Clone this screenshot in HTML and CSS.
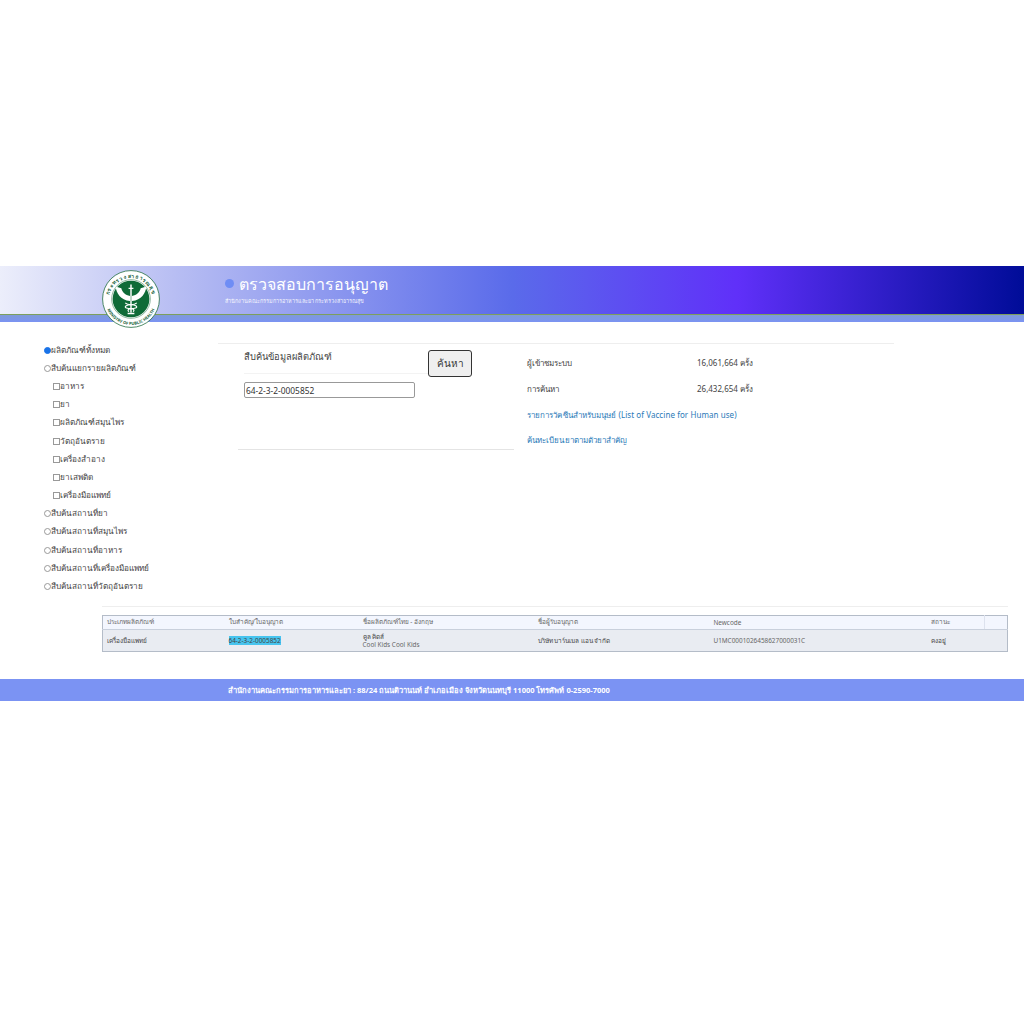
FILE: index.html
```html
<!DOCTYPE html>
<html lang="th">
<head>
<meta charset="utf-8">
<title>ตรวจสอบการอนุญาต</title>
<link rel="stylesheet" href="styles.css">
</head>
<body>
<header class="banner">
  <div class="banner-main">
    <span class="dot"></span>
    <div class="banner-text">
      <div class="banner-title">ตรวจสอบการอนุญาต</div>
      <div class="banner-sub">สำนักงานคณะกรรมการอาหารและยา กระทรวงสาธารณสุข</div>
    </div>
  </div>
  <div class="banner-strip"></div>
  <svg class="logo" viewBox="0 0 60 60" width="58" height="58" aria-label="logo">
    <defs>
      <path id="arc-top" d="M7.5 36a23 23 0 1 1 45 0"/>
      <path id="arc-bot" d="M3.5 34a26.8 26.8 0 0 0 53 0"/>
    </defs>
    <circle cx="30" cy="30" r="29.4" fill="#fff" stroke="#1c6b3c" stroke-width=".8"/>
    <circle cx="30" cy="30" r="19" fill="#0f6b38"/>
    <circle cx="30" cy="30" r="20" fill="none" stroke="#1c6b3c" stroke-width=".5"/>
    <text class="logo-t"><textPath href="#arc-top" startOffset="50%" text-anchor="middle">กระทรวงสาธารณสุข</textPath></text>
    <text class="logo-b"><textPath href="#arc-bot" startOffset="50%" text-anchor="middle">MINISTRY OF PUBLIC HEALTH</textPath></text>
    <path d="M30 15v29M27.5 19h5M26.5 45h7" stroke="#fff" stroke-width="1.5" fill="none"/>
    <path d="M29 27c-5-1-8-4-9-8l-6-2c1 7 5 14 15 15zM31 27c5-1 8-4 9-8l6-2c-1 7-5 14-15 15z" fill="#fff"/>
    <path d="M24 34c3 3 8 1 11 3s-2 3-5 3-4 2-2 3" stroke="#fff" stroke-width="1.2" fill="none"/>
    <path d="M36 34c-3 3-8 1-11 3s2 3 5 3 4 2 2 3" stroke="#fff" stroke-width="1.2" fill="none"/>
  </svg>
</header>

<main class="content">
  <nav class="filters">
    <label class="opt"><span class="radio on"></span>ผลิตภัณฑ์ทั้งหมด</label>
    <label class="opt"><span class="radio"></span>สืบค้นแยกรายผลิตภัณฑ์</label>
    <label class="opt sub"><span class="check"></span>อาหาร</label>
    <label class="opt sub"><span class="check"></span>ยา</label>
    <label class="opt sub"><span class="check"></span>ผลิตภัณฑ์สมุนไพร</label>
    <label class="opt sub"><span class="check"></span>วัตถุอันตราย</label>
    <label class="opt sub"><span class="check"></span>เครื่องสำอาง</label>
    <label class="opt sub"><span class="check"></span>ยาเสพติด</label>
    <label class="opt sub"><span class="check"></span>เครื่องมือแพทย์</label>
    <label class="opt"><span class="radio"></span>สืบค้นสถานที่ยา</label>
    <label class="opt"><span class="radio"></span>สืบค้นสถานที่สมุนไพร</label>
    <label class="opt"><span class="radio"></span>สืบค้นสถานที่อาหาร</label>
    <label class="opt"><span class="radio"></span>สืบค้นสถานที่เครื่องมือแพทย์</label>
    <label class="opt"><span class="radio"></span>สืบค้นสถานที่วัตถุอันตราย</label>
  </nav>

  <section class="center">
    <div class="search">
      <div class="search-row">
        <div class="search-field">
          <div class="search-title">สืบค้นข้อมูลผลิตภัณฑ์</div>
          <input class="search-input" type="text" value="64-2-3-2-0005852">
        </div>
        <button class="search-btn" type="button">ค้นหา</button>
      </div>
    </div>
    <div class="stats">
      <div class="stat"><span class="stat-label">ผู้เข้าชมระบบ</span><span>16,061,664 ครั้ง</span></div>
      <div class="stat"><span class="stat-label">การค้นหา</span><span>26,432,654 ครั้ง</span></div>
      <div class="stat"><a class="link">รายการวัคซีนสำหรับมนุษย์ (List of Vaccine for Human use)</a></div>
      <div class="stat"><a class="link">ค้นทะเบียนยาตามตัวยาสำคัญ</a></div>
    </div>
  </section>
</main>

<section class="results">
  <table class="grid">
    <thead>
      <tr>
        <th class="c1">ประเภทผลิตภัณฑ์</th>
        <th class="c2">ใบสำคัญ/ใบอนุญาต</th>
        <th class="c3">ชื่อผลิตภัณฑ์ไทย - อังกฤษ</th>
        <th class="c4">ชื่อผู้รับอนุญาต</th>
        <th class="c5">Newcode</th>
        <th class="c6">สถานะ</th>
        <th class="c7"></th>
      </tr>
    </thead>
    <tbody>
      <tr>
        <td>เครื่องมือแพทย์</td>
        <td><mark class="hit">64-2-3-2-0005852</mark></td>
        <td>คูล คิดส์<br><span class="en">Cool Kids Cool Kids</span></td>
        <td>บริษัท บาร์นเมล แอน จำกัด</td>
        <td class="en">U1MC0001026458627000031C</td>
        <td>คงอยู่</td>
        <td></td>
      </tr>
    </tbody>
  </table>
</section>

<footer class="foot">สำนักงานคณะกรรมการอาหารและยา : 88/24 ถนนติวานนท์ อำเภอเมือง จังหวัดนนทบุรี 11000 โทรศัพท์ 0-2590-7000</footer>
</body>
</html>
```
FILE: styles.css
```css
* { box-sizing: border-box; }
html, body { margin: 0; background: #fff; }
body {
  padding-top: 266px;
  font-family: "Noto Sans", "Liberation Sans", sans-serif;
  font-size: 8.2px;
  color: #444;
}

.banner { position: relative; height: 56px; }
.banner-main {
  height: 49px;
  display: flex;
  align-items: flex-start;
  padding: 9px 0 0 225px;
  background: linear-gradient(90deg, #eceefb 0, #b8bef3 17%, #5a6bea 50%, #6030f9 72%, #000c98 100%);
  border-bottom: 1px solid #7d9f5c;
}
.banner-strip { height: 7px; background: linear-gradient(180deg, #7f9ad8, #7b93f3); }
.dot { width: 9px; height: 9px; margin-top: 4px; border-radius: 50%; background: #6f8df5; }
.banner-text { margin-left: 5px; margin-top: -1px; color: #fff; }
.banner-title { font-size: 16px; line-height: 20px; font-weight: 500; }
.banner-sub { font-size: 5.5px; line-height: 8px; margin: 3px 0 0 -14px; opacity: .9; }

.logo { position: absolute; left: 102px; top: 4px; }
.logo-t { font-size: 5.4px; font-weight: 700; fill: #14603a; letter-spacing: .8px; }
.logo-b { font-size: 4.2px; font-weight: 700; fill: #14603a; }

.content { display: flex; padding: 19px 130px 0 44px; }
.filters { width: 174px; flex: none; display: flex; flex-direction: column; }
.opt { display: flex; align-items: center; height: 18.2px; white-space: nowrap; }
.sub { padding-left: 9px; }
.radio, .check { flex: none; width: 7px; height: 7px; border: 1px solid #999; background: #fff; }
.radio { border-radius: 50%; }
.radio.on { background: #1a73e8; border-color: #1a73e8; }

.center { flex: 1; display: flex; margin-top: 2px; border-top: 1px solid #eee; align-items: flex-start; }
.search { width: 276px; height: 106px; margin-left: 20px; border-bottom: 1px solid #e4e4e4; padding: 0 0 0 6px; }
.search-row { display: flex; align-items: flex-start; }
.search-field { width: 184px; }
.search-title { height: 30px; padding-top: 5px; font-size: 9.3px; line-height: 15px; border-bottom: 1px solid #f3f3f3; color: #444; }
.search-input {
  display: block; width: 171px; height: 16px; margin-top: 8px; padding: 0 1px;
  border: 1px solid #999; border-radius: 2px; font: 8.4px "Noto Sans", sans-serif; color: #333;
}
.search-btn {
  width: 44px; height: 27px; margin-top: 6px; padding: 0;
  border: 1px solid #333; border-radius: 3px; background: #efefef;
  font: 10px "Noto Sans", sans-serif; color: #333;
}
.stats { margin-left: 13px; padding-top: 7px; font-size: 8px; }
.stat { display: flex; align-items: center; height: 25.7px; white-space: nowrap; }
.stat-label { width: 170px; }
.link { color: #2a7ab8; letter-spacing: .07px; }

.results { margin: 10px 16px 0 102px; border-top: 1px solid #eee; padding-top: 8px; }
.grid { width: 100%; table-layout: fixed; border-collapse: collapse; border: 1px solid #b4bcc8; font-size: 6.4px; font-weight: 400; color: #444; }
.grid th { height: 14px; padding: 0 0 0 4px; text-align: left; font-weight: 400; color: #666; background: #f3f6fe; border-bottom: 1px solid #c9d0dc; }
.grid td { height: 22px; padding: 1px 0 0 4px; line-height: 8px; background: #e9ecf2; }
.c1 { width: 122px; }
.c2 { width: 134px; }
.c3 { width: 175px; }
.c4 { width: 176px; }
.c5 { width: 217px; }
.c6 { width: 58px; }
.c7 { border-left: 1px solid #dde2ee; }
.en { color: #666; }
.hit { background: #47c4ee; color: #444; }

.foot {
  margin-top: 27px; height: 22px; padding-left: 228px;
  display: flex; align-items: center;
  background: #7b93f3; color: #fff; font-size: 7.5px; font-weight: 700;
}
```
